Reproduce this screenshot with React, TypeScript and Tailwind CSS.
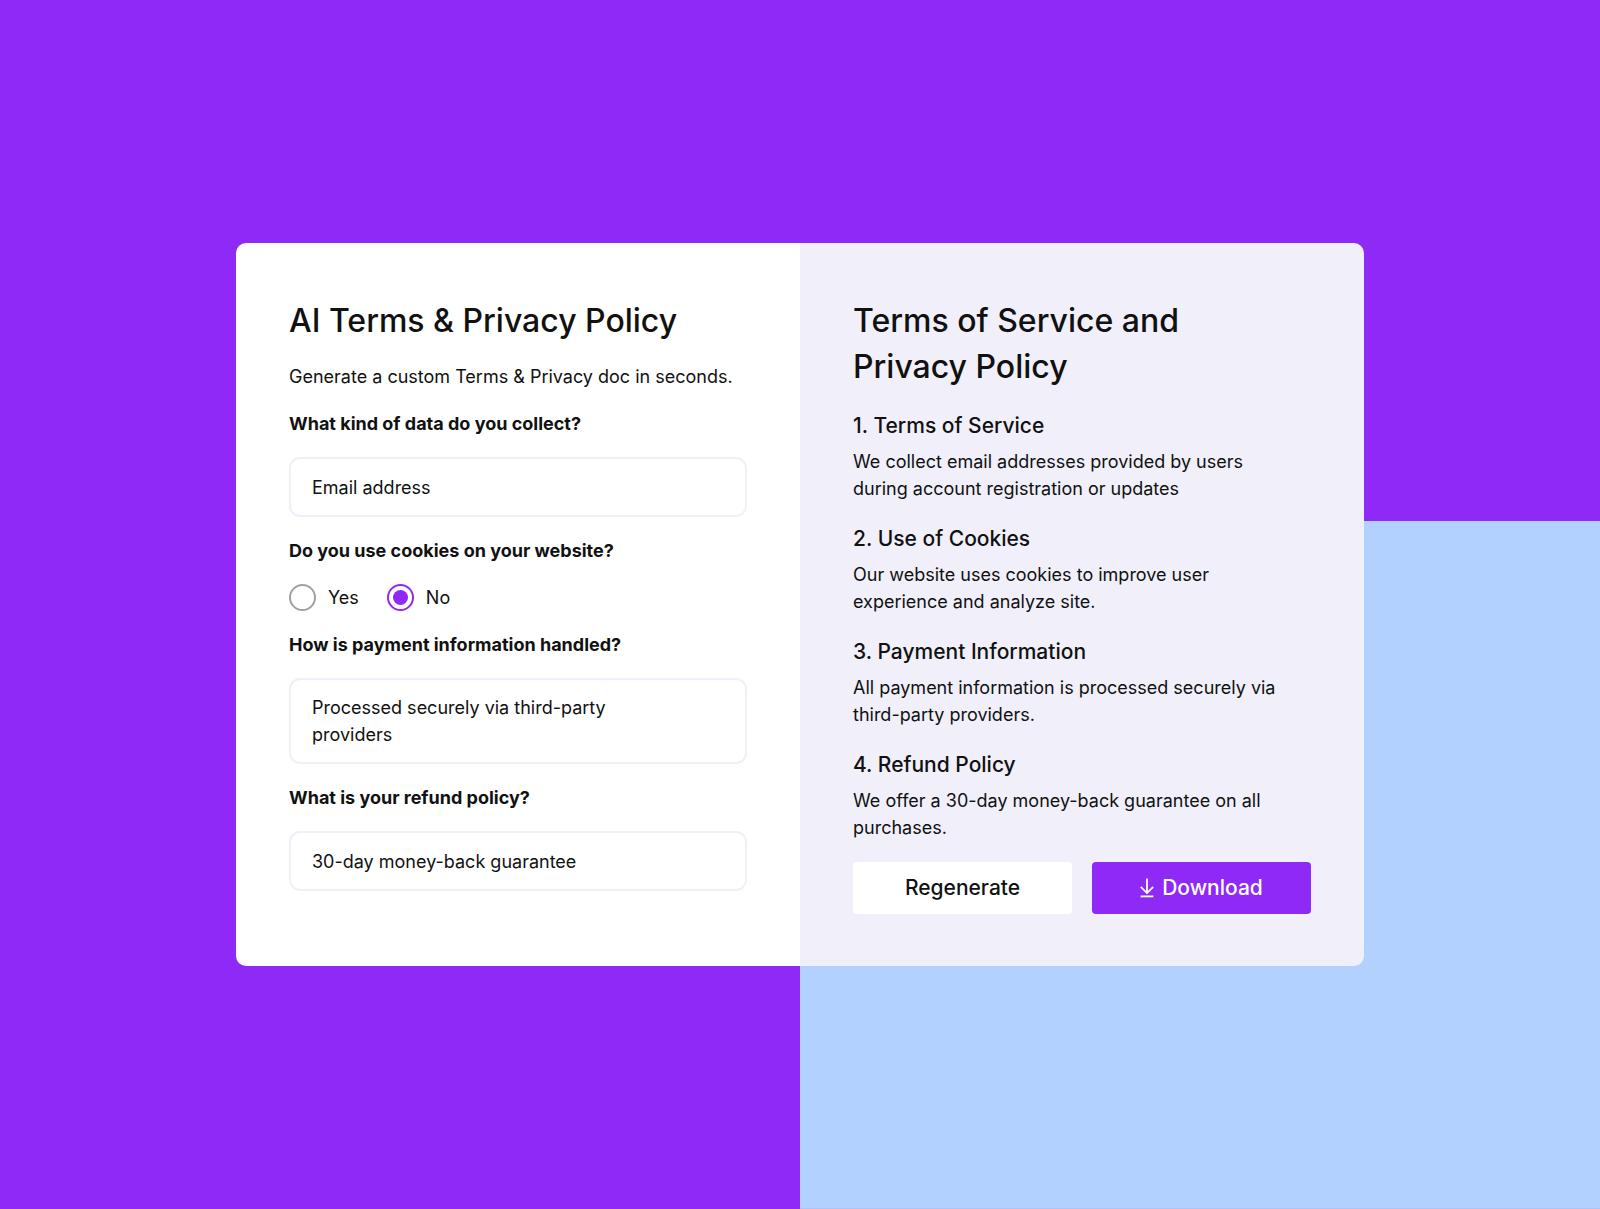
import { useState } from "react";
import type { ReactNode } from "react";

const sections = [
  {
    title: "1. Terms of Service",
    lines: ["We collect email addresses provided by users", "during account registration or updates"],
  },
  {
    title: "2. Use of Cookies",
    lines: ["Our website uses cookies to improve user", "experience and analyze site."],
  },
  {
    title: "3. Payment Information",
    lines: ["All payment information is processed securely via", "third-party providers."],
  },
  {
    title: "4. Refund Policy",
    lines: ["We offer a 30-day money-back guarantee on all", "purchases."],
  },
];

const fieldClass =
  "block w-full rounded-[11px] border-2 border-[#f0effa] bg-white px-[21px] text-[18px] leading-[27px] text-[#111111] outline-none focus:border-[#8f29f5]";

function Field({ id, label, children }: { id: string; label: string; children: ReactNode }) {
  return (
    <div className="flex flex-col gap-5">
      <label htmlFor={id} className="text-[18px] leading-[27px] font-bold">
        {label}
      </label>
      {children}
    </div>
  );
}

function RadioOption({
  label,
  checked,
  onSelect,
}: {
  label: string;
  checked: boolean;
  onSelect: () => void;
}) {
  return (
    <label className="flex h-[27px] items-center gap-3 text-[18px] leading-[27px]">
      <input
        type="radio"
        name="cookies"
        checked={checked}
        onChange={onSelect}
        className="grid size-[27px] appearance-none place-content-center rounded-full border-2 border-[#a0a0a5] bg-white before:size-[15px] before:rounded-full checked:border-[#8f29f5] checked:before:bg-[#8f29f5]"
      />
      {label}
    </label>
  );
}

function DownloadIcon() {
  return (
    <svg width="14" height="20" viewBox="0 0 14 20" fill="none" stroke="currentColor" strokeWidth="1.8" aria-hidden="true">
      <path d="M7 .5v14.6" />
      <path d="M.8 8.9 7 15.1l6.200-6.200" />
      <path d="M.6 18.400h12.800" />
    </svg>
  );
}

export default function App() {
  const [cookies, setCookies] = useState("No");

  return (
    <main className="flex min-h-screen items-center justify-center bg-[#8f29f5] bg-[linear-gradient(#b2d1ff,#b2d1ff)] bg-[size:50%_56.9%] bg-right-bottom bg-no-repeat p-6 font-['Inter',sans-serif] text-[#111111]">
      <div className="grid w-full max-w-[1128px] overflow-hidden rounded-[10px] md:grid-cols-2">
        <form className="bg-white px-[53px] pt-[55px] pb-[52px]" onSubmit={(e) => e.preventDefault()}>
          <h1 className="text-[32px] leading-[46px] font-medium">AI Terms &amp; Privacy Policy</h1>
          <div className="mt-[19px] flex flex-col gap-5">
            <p className="text-[18px] leading-[27px]">Generate a custom Terms &amp; Privacy doc in seconds.</p>

            <Field id="data" label="What kind of data do you collect?">
              <input id="data" type="text" defaultValue="Email address" className={`${fieldClass} h-[60px]`} />
            </Field>

            <fieldset className="flex flex-col">
              <legend className="mb-5 text-[18px] leading-[27px] font-bold">Do you use cookies on your website?</legend>
              <div className="flex gap-7">
                <RadioOption label="Yes" checked={cookies === "Yes"} onSelect={() => setCookies("Yes")} />
                <RadioOption label="No" checked={cookies === "No"} onSelect={() => setCookies("No")} />
              </div>
            </fieldset>

            <Field id="payment" label="How is payment information handled?">
              <textarea
                id="payment"
                rows={2}
                defaultValue={"Processed securely via third-party\nproviders"}
                className={`${fieldClass} h-[86px] resize-none overflow-hidden py-[14px]`}
              />
            </Field>

            <Field id="refund" label="What is your refund policy?">
              <input id="refund" type="text" defaultValue="30-day money-back guarantee" className={`${fieldClass} h-[60px]`} />
            </Field>
          </div>
        </form>

        <section className="bg-[#f0effa] px-[53px] pt-[55px] pb-[52px]">
          <h2 className="text-[32px] leading-[46px] font-medium">
            Terms of Service and
            <br />
            Privacy Policy
          </h2>
          <div className="mt-5 flex flex-col gap-[21px]">
            {sections.map((section) => (
              <article key={section.title} className="flex flex-col gap-[6px]">
                <h3 className="text-[21px] leading-[32px] font-medium">{section.title}</h3>
                <p className="text-[18px] leading-[27px]">
                  {section.lines[0]}
                  <br />
                  {section.lines[1]}
                </p>
              </article>
            ))}
            <div className="grid grid-cols-2 gap-5">
              <button type="button" className="h-[52px] rounded bg-white text-[21px] font-medium">
                Regenerate
              </button>
              <button
                type="button"
                className="flex h-[52px] items-center justify-center gap-2 rounded bg-[#8f29f5] text-[21px] font-medium text-white"
              >
                <DownloadIcon />
                Download
              </button>
            </div>
          </div>
        </section>
      </div>
    </main>
  );
}
